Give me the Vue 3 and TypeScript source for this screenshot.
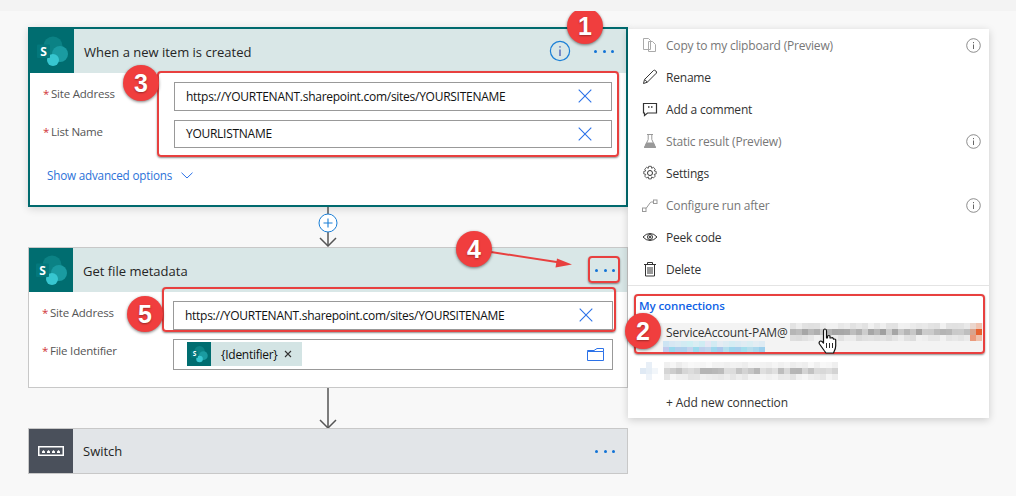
<script setup lang="ts">
function rnd(seed: number): () => number {
  let s = seed
  return () => {
    s = (s * 16807) % 2147483647
    return (s % 1000) / 1000
  }
}
function shade(base: number, spread: number, r: () => number): string {
  const v = Math.round(base + r() * spread)
  return `rgb(${v},${v},${v})`
}
function grayBlur(cols: number, seed: number, bases: number[], spreads: number[]): string[] {
  const r = rnd(seed)
  const out: string[] = []
  bases.forEach((b, i) => {
    for (let c = 0; c < cols; c++) out.push(shade(b, spreads[i], r))
  })
  return out
}
const acct = grayBlur(32, 77, [224, 160, 218], [18, 45, 24])
// orange patch closes the first blurred row
acct[30] = '#ebd6cd'; acct[31] = '#f0c3b0'
acct[62] = '#d8a48e'; acct[63] = '#e8622f'
acct[94] = '#ea9a7c'; acct[95] = '#efc0ab'
const acctBlue: string[] = []
{
  const r = rnd(31)
  for (let i = 0; i < 17; i++) acctBlue.push(`rgb(${205 + Math.round(r() * 25)},${226 + Math.round(r() * 15)},${243})`)
  for (let i = 0; i < 17; i++) acctBlue.push(`rgb(${150 + Math.round(r() * 50)},${198 + Math.round(r() * 25)},${236})`)
}
const other = grayBlur(29, 501, [236, 180, 226], [14, 45, 20])
const otherIcon = ['#ffffff', '#e8eff7', '#ffffff', '#dfe9f4', '#e6eef6', '#f2f6fa', '#ffffff', '#eef3f9', '#ffffff']

interface Item { id: string; label: string; off?: boolean; info?: boolean }
const items: Item[] = [
  { id: 'copy', label: 'Copy to my clipboard (Preview)', off: true, info: true },
  { id: 'rename', label: 'Rename' },
  { id: 'comment', label: 'Add a comment' },
  { id: 'flask', label: 'Static result (Preview)', off: true, info: true },
  { id: 'gear', label: 'Settings' },
  { id: 'run', label: 'Configure run after', off: true, info: true },
  { id: 'eye', label: 'Peek code' },
  { id: 'trash', label: 'Delete' },
]
const badges = [
  { n: 1, x: 585, y: 26 },
  { n: 2, x: 643, y: 331 },
  { n: 3, x: 141, y: 83 },
  { n: 4, x: 474, y: 249 },
  { n: 5, x: 145, y: 314 },
]
const boxes = [
  { x: 157, y: 71, w: 462, h: 86 },
  { x: 162, y: 287, w: 454, h: 45 },
  { x: 588, y: 256, w: 32, h: 27 },
  { x: 634, y: 294, w: 351, h: 60 },
]
</script>

<template>
  <div class="page">
    <div class="flow">
      <section class="card active">
        <header class="head sp">
          <span class="tile">
            <svg width="44" height="44" viewBox="0 0 44 44"><circle cx="23" cy="17" r="9.500" fill="#0b8285"/><circle cx="30" cy="25" r="8" fill="#1a9ba1"/><circle cx="23" cy="31" r="6" fill="#37c6d0"/><rect x="7" y="15.500" width="13" height="13.500" rx="1" fill="#03787c"/><text x="13.500" y="26.500" text-anchor="middle" class="s">S</text></svg>
          </span>
          <span class="title">When a new item is created</span>
          <svg class="info" width="22" height="22" viewBox="0 0 22 22"><circle cx="11" cy="11" r="9.600" fill="none" stroke="#1b7fd6" stroke-width="1.200"/><rect x="10.400" y="9.500" width="1.200" height="6.500" fill="#3a4fb0"/><rect x="10.400" y="6.200" width="1.200" height="1.400" fill="#3a4fb0"/></svg>
          <span class="dots"><i></i><i></i><i></i></span>
        </header>
        <div class="form">
          <label class="lab"><em>*</em> Site Address</label>
          <div class="field"><span>https://YOURTENANT.sharepoint.com/sites/YOURSITENAME</span><svg class="x" width="14" height="14" viewBox="0 0 14 14"><path d="M.7.7l12.6 12.6M13.3.7L.7 13.3" stroke="#2c72e8" stroke-width="1.100" fill="none"/></svg></div>
          <label class="lab"><em>*</em> List Name</label>
          <div class="field"><span>YOURLISTNAME</span><svg class="x" width="14" height="14" viewBox="0 0 14 14"><path d="M.7.7l12.6 12.6M13.3.7L.7 13.3" stroke="#2c72e8" stroke-width="1.100" fill="none"/></svg></div>
        </div>
        <div class="adv">Show advanced options
          <svg width="12" height="7" viewBox="0 0 12 7"><path d="M.5.7L6 6l5.500-5.300" fill="none" stroke="#2c72e8" stroke-width="1"/></svg>
        </div>
      </section>

      <svg class="link" width="24" height="40" viewBox="0 0 24 40">
        <path d="M12 0v7M12 25v14" stroke="#555" stroke-width="1.500"/>
        <path d="M4 31l8 8 8-8" fill="none" stroke="#555" stroke-width="1.500"/>
        <circle cx="12" cy="16" r="9" fill="#fff" stroke="#1b7fd6" stroke-width="1"/>
        <path d="M7.500 16h9M12 11.500v9" stroke="#1b7fd6" stroke-width="1.100"/>
      </svg>

      <section class="card meta">
        <header class="head sp">
          <span class="tile">
            <svg width="44" height="44" viewBox="0 0 44 44"><circle cx="23" cy="17" r="9.500" fill="#0b8285"/><circle cx="30" cy="25" r="8" fill="#1a9ba1"/><circle cx="23" cy="31" r="6" fill="#37c6d0"/><rect x="7" y="15.500" width="13" height="13.500" rx="1" fill="#03787c"/><text x="13.500" y="26.500" text-anchor="middle" class="s">S</text></svg>
          </span>
          <span class="title">Get file metadata</span>
          <span class="dots"><i></i><i></i><i></i></span>
        </header>
        <div class="form">
          <label class="lab"><em>*</em> Site Address</label>
          <div class="field"><span>https://YOURTENANT.sharepoint.com/sites/YOURSITENAME</span><svg class="x" width="14" height="14" viewBox="0 0 14 14"><path d="M.7.7l12.6 12.6M13.3.7L.7 13.3" stroke="#2c72e8" stroke-width="1.100" fill="none"/></svg></div>
          <label class="lab"><em>*</em> File Identifier</label>
          <div class="field tall">
            <span class="token">
              <span class="mini"><svg width="24" height="24" viewBox="0 0 44 44"><circle cx="23" cy="17" r="9.500" fill="#0b8285"/><circle cx="30" cy="25" r="8" fill="#1a9ba1"/><circle cx="23" cy="31" r="6" fill="#37c6d0"/><rect x="7" y="15.500" width="13" height="13.500" rx="1" fill="#03787c"/><text x="13.500" y="26.500" text-anchor="middle" class="s">S</text></svg></span>
              <span class="tok-text">{Identifier}</span>
              <svg width="8" height="8" viewBox="0 0 8 8"><path d="M1 1l6 6M7 1L1 7" stroke="#333" stroke-width="1.100"/></svg>
            </span>
            <svg class="folder" width="17" height="13" viewBox="0 0 17 13"><path d="M.5 3.500h16v9H.5zM.5 3.500v-1h6.500l3-2h6.500v3" fill="none" stroke="#2c72e8" stroke-width="1"/></svg>
          </div>
        </div>
      </section>

      <svg class="link" width="24" height="41" viewBox="0 0 24 41">
        <path d="M12 0v40" stroke="#555" stroke-width="1.500"/>
        <path d="M4 32l8 8 8-8" fill="none" stroke="#555" stroke-width="1.500"/>
      </svg>

      <section class="card sw">
        <header class="head gray">
          <span class="tile dark">
            <svg width="26" height="10" viewBox="0 0 26 10"><rect x=".75" y=".75" width="24.500" height="8.500" fill="none" stroke="#fff" stroke-width="1.500"/><path d="M4 7V5.500l1.500-1.500L7 5.500V7zM9 7V5.500l1.500-1.500L12 5.500V7zM14 7V5.500l1.500-1.500L17 5.500V7zM19 7V5.500l1.500-1.500L22 5.500V7z" fill="#fff"/></svg>
          </span>
          <span class="title plain">Switch</span>
          <span class="dots"><i></i><i></i><i></i></span>
        </header>
      </section>
    </div>

    <aside class="menu">
      <ul class="items">
        <li v-for="it in items" :key="it.id" class="item" :class="{ off: it.off }">
          <svg class="ico" width="16" height="16" viewBox="0 0 16 16" fill="none" stroke="currentColor" stroke-width="1">
            <template v-if="it.id === 'copy'"><path d="M1.500 1.500h5l2 2v9h-7zM6.500 4.500h4l3 3v7h-7z" fill="#fff" stroke="#aaa"/></template>
            <template v-else-if="it.id === 'rename'"><path d="M1.500 14.500l1-4L11.500 1.500q1-.8 2.300.4t.5 2.300l-9 9z"/><path d="M2.700 10.500l2.700 2.700"/></template>
            <template v-else-if="it.id === 'comment'"><path d="M1.500 2.500h13v9.500h-9l-3 2.500v-2.500h-1z" stroke-width="1.200"/><path d="M6 6h1.500M9 6h1.500" stroke-width="1.600"/></template>
            <template v-else-if="it.id === 'flask'"><path d="M5 1.500h6M6.200 1.500v5L2.500 14.500h11L9.800 6.500v-5" stroke="#999"/><path d="M4.500 10h7l2 4.500h-11z" fill="#999" stroke="#999"/></template>
            <template v-else-if="it.id === 'gear'"><circle cx="8" cy="8" r="2.500"/><path d="M6.700 1.300h2.600l.4 2 1.700-1 1.900 1.900-1.100 1.700 2 .5v2.500l-2 .5 1.100 1.700-1.900 1.900-1.700-1.100-.4 2H6.700l-.4-2-1.700 1.100-1.900-1.900 1.100-1.700-2-.5V6.400l2-.5-1.100-1.700 1.900-1.900 1.700 1z" stroke-width=".8"/></template>
            <template v-else-if="it.id === 'run'"><g stroke="#999"><rect x=".5" y="11" width="3.500" height="3.500"/><rect x="11.500" y="3" width="3.500" height="3.500"/><path d="M4 11.500L8 6q.5-1 1.500-1h2"/></g></template>
            <template v-else-if="it.id === 'eye'"><path d="M1 8q3-3.500 7-3.500T15 8q-3 3.500-7 3.500T1 8z"/><circle cx="8" cy="8" r="2.500"/><circle cx="8" cy="8" r=".8" fill="currentColor"/></template>
            <template v-else><path d="M2 3.500h12M5.500 3.500V1.500h5v2M3.500 3.500v11.500h9V3.500M6 6v7M8 6v7M10 6v7"/></template>
          </svg>
          <span class="item-label">{{ it.label }}</span>
          <svg v-if="it.info" class="item-info" width="15" height="15" viewBox="0 0 15 15"><circle cx="7.500" cy="7.500" r="6.800" fill="none" stroke="#808080" stroke-width=".9"/><path d="M7.500 6.500v4.500M7.500 4v1.200" stroke="#666" stroke-width="1"/></svg>
        </li>
      </ul>
      <div class="conns">
        <div class="conn-head">My connections</div>
        <div class="conn hover">
          <div class="line"><span class="who">ServiceAccount-PAM@</span><span class="blur c32"><i v-for="(c, i) in acct" :key="i" :style="{ background: c }"></i></span></div>
          <span class="blur c17"><i v-for="(c, i) in acctBlue" :key="i" :style="{ background: c }"></i></span>
        </div>
        <div class="conn second">
          <span class="blur c3"><i v-for="(c, i) in otherIcon" :key="i" :style="{ background: c }"></i></span>
          <span class="blur c29"><i v-for="(c, i) in other" :key="i" :style="{ background: c }"></i></span>
        </div>
        <div class="add">+ Add new connection</div>
      </div>
    </aside>

    <div v-for="(b, i) in boxes" :key="i" class="mark" :style="{ left: b.x + 'px', top: b.y + 'px', width: b.w + 'px', height: b.h + 'px' }"></div>
    <svg class="arrow" width="90" height="22" viewBox="0 0 90 22">
      <path d="M1 3l72 11" stroke="#e8403f" stroke-width="2" fill="none"/>
      <path d="M82 15.500l-15-6 -1.500 9z" fill="#e8403f"/>
    </svg>
    <svg class="hand" width="20" height="26" viewBox="0 0 20 26">
      <path d="M5.500 3q0-2 1.500-2t1.500 2v7l1-.2V8q1.500-1 2.500 0v2l1 0q1.500-.8 2.200.4l.3.8q1.500-.6 2.200.6v6q0 3-1.500 5.500L15.500 25H8l-1.500-2L1.500 16q-1-1.800.5-2.800 1.200-.5 2 .3l1.500 1.500z" fill="#fff" stroke="#111" stroke-width="1.200" stroke-linejoin="round"/>
      <path d="M8.500 15v5M11.500 15v5M14.500 15v5" stroke="#111" stroke-width=".9"/>
    </svg>
    <div v-for="b in badges" :key="b.n" class="badge" :style="{ left: b.x - 18 + 'px', top: b.y - 18 + 'px' }">{{ b.n }}</div>
  </div>
</template>

<style>
html, body { margin: 0; background: #f8f8f8; }
</style>

<style scoped>
.page {
  position: relative;
  width: 1016px;
  height: 496px;
  box-sizing: border-box;
  overflow: hidden;
  background: #f8f8f8;
  border-top: 11px solid #f3f3f3;
  font-family: "Open Sans", "Noto Sans", sans-serif;
  font-size: 12px;
  color: #252525;
}
.flow {
  display: flex;
  flex-direction: column;
  align-items: center;
  width: 600px;
  margin-left: 28px;
  padding-top: 16px;
}
.card {
  width: 600px;
  box-sizing: border-box;
  background: #fff;
  border: 1px solid #c8c8c8;
}
.active { height: 180px; border: 2px solid #006a6e; box-shadow: 0 2px 8px rgba(0, 0, 0, .14); }
.meta { height: 141px; }
.sw { height: 46px; margin-top: -1px; }
.head { display: flex; align-items: center; height: 44px; }
.sp { background: #d9e7e7; }
.gray { background: #e2e5e8; }
.tile {
  flex: none;
  width: 44px;
  height: 44px;
  display: flex;
  align-items: center;
  justify-content: center;
  background: #006d70;
}
.dark { background: #4a505b; }
.s { font: 700 12px "Open Sans", sans-serif; fill: #fff; }
.title { flex: 1; margin-left: 10px; padding-top: 2px; font-size: 13px; }
.title.plain { padding-top: 0; }
.info { margin-right: 23px; }
.dots { display: flex; gap: 5.500px; margin-right: 12px; padding-top: 1px; }
.dots i { width: 3px; height: 3px; border-radius: 50%; background: #1273d6; }
.form {
  display: grid;
  grid-template-columns: 131px 438px;
  row-gap: 9px;
  padding: 9px 0 0 13px;
}
.meta .form { grid-template-columns: 131px 440px; }
.lab { padding-top: 4px; color: #555; font-size: 11.500px; letter-spacing: -.2px; }
.lab em { font-style: normal; color: #d13438; margin-right: -1px; }
.field {
  display: flex;
  align-items: center;
  justify-content: space-between;
  box-sizing: border-box;
  height: 28.500px;
  padding: 0 19px 0 11px;
  border: 1px solid #999;
  font-size: 12px;
  letter-spacing: -.27px;
  color: #111;
}
.tall { height: 31px; padding: 0 8px 0 13px; }
.token {
  display: flex;
  align-items: center;
  width: 115px;
  height: 24px;
  background: #d3e4e4;
}
.mini { display: flex; width: 24px; height: 24px; background: #006d70; }
.tok-text { margin: 0 6px 0 10px; }
.adv {
  display: flex;
  align-items: center;
  gap: 9px;
  margin: 19px 0 0 17px;
  color: #2c72d8;
  font-size: 11.700px;
  letter-spacing: -.2px;
}
.link { flex: none; display: block; }
.menu {
  position: absolute;
  left: 628px;
  top: 18px;
  width: 361px;
  height: 389px;
  background: #fff;
  box-shadow: 0 2px 8px rgba(0, 0, 0, .18);
}
.items { list-style: none; margin: 0; padding: 0; border-bottom: 1px solid #e4e4e4; height: 256px; }
.item { display: flex; align-items: center; height: 32px; padding: 0 8px 0 14px; color: #333; letter-spacing: -.2px; }
.item.off { color: #777; }
.ico { flex: none; margin-right: 8px; }
.item-label { flex: 1; padding-top: 1px; }
.conns { padding: 12px 0 0; }
.conn-head { margin-left: 11px; color: #0f62e6; font-weight: 600; font-size: 11.500px; line-height: 16px; letter-spacing: -.1px; }
.conn { margin-top: 9px; }
.hover { height: 30px; background: #f3f3f3; padding-left: 32px; margin: 9px 4px 0 6px; }
.line { display: flex; align-items: center; height: 18px; color: #333; letter-spacing: -.2px; }
.who { flex: none; width: 124px; white-space: nowrap; }
.blur { display: grid; flex: none; }
.blur i { display: block; }
.c32 { grid-template-columns: repeat(32, 6px); grid-auto-rows: 6px; }
.c17 { grid-template-columns: repeat(17, 6px); grid-auto-rows: 6px; margin-left: -3px; }
.c29 { grid-template-columns: repeat(29, 6px); grid-auto-rows: 6px; }
.c3 { grid-template-columns: repeat(3, 6px); grid-auto-rows: 6px; }
.second { display: flex; gap: 6px; margin-left: 12px; margin-top: 9px; }
.add { margin: 15px 0 0 38px; color: #333; letter-spacing: -.1px; line-height: 16px; }
.mark {
  position: absolute;
  box-sizing: border-box;
  margin-top: -11px;
  border: 2px solid #e8403f;
  border-radius: 4px;
  box-shadow: 0 1px 2px rgba(0, 0, 0, .45);
}
.arrow { position: absolute; left: 490px; top: 238px; }
.hand { position: absolute; left: 818px; top: 317px; }
.badge {
  position: absolute;
  margin-top: -11px;
  width: 36px;
  height: 36px;
  border-radius: 50%;
  background: #f03e3e;
  box-shadow: 0 1px 3px rgba(0, 0, 0, .5);
  color: #fff;
  font: 700 25px/36px "Liberation Sans", sans-serif;
  text-align: center;
  text-shadow: 0 1px 2px rgba(0, 0, 0, .35);
}
</style>
